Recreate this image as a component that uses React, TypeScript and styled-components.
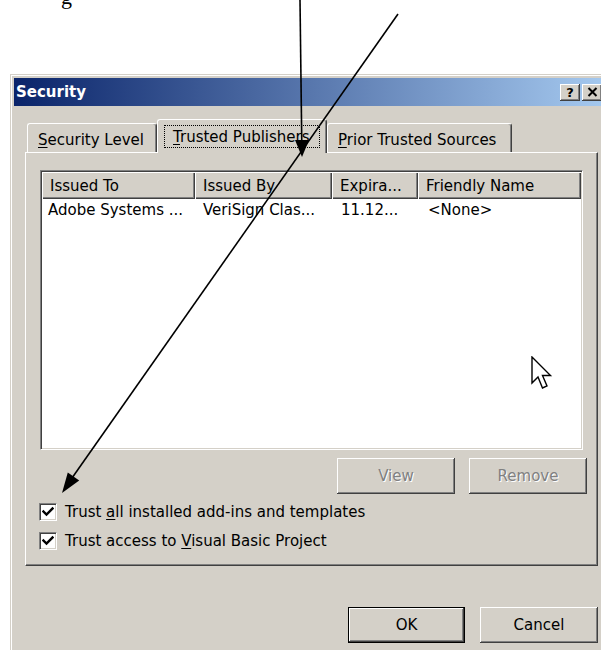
import React from "react";
import styled, { createGlobalStyle } from "styled-components";

const GlobalStyle = createGlobalStyle`
  *, *::before, *::after { box-sizing: border-box; }
  html, body { margin: 0; padding: 0; background: #ffffff; overflow: hidden; }
  #root { width: 601px; height: 650px; overflow: hidden; }
`;

const uiFont = `"DejaVu Sans", "Noto Sans", sans-serif`;
const face = "#d4d0c8";
const shadow = "#808080";
const darkShadow = "#404040";

const Page = styled.div`
  position: relative;
  width: 601px;
  height: 650px;
  overflow: hidden;
  background: #ffffff;
`;

/* tail of the document text that sits above the dialog */
const Above = styled.div`
  height: 74px;
  padding-left: 61px;
  overflow: hidden;
  font-family: "Liberation Serif", serif;
`;

const Fragment = styled.div`
  font-size: 22px;
  line-height: 22px;
  margin-top: -14px;
  color: #000;
`;

const Dialog = styled.div`
  width: 603px;
  height: 600px;
  margin-left: 10px;
  background: ${face};
  border: 1px solid ${face};
  box-shadow: inset 1px 1px 0 #ffffff;
  padding: 3px 3px 0 3px;
  font-family: ${uiFont};
  font-size: 15px;
  color: #000;
`;

const TitleBar = styled.div`
  height: 28px;
  display: flex;
  align-items: center;
  padding-left: 2px;
  background: linear-gradient(to right, #0a246a 0%, #a6caf0 100%);
  color: #ffffff;
  font-weight: bold;
  font-size: 15px;
`;

const CaptionButtons = styled.div`
  margin-left: auto;
  margin-right: 7px;
  display: flex;
  gap: 2px;
`;

const CaptionButton = styled.div`
  width: 20px;
  height: 17px;
  display: flex;
  align-items: center;
  justify-content: center;
  background: ${face};
  color: #000;
  font-family: "DejaVu Sans", sans-serif;
  font-weight: bold;
  font-size: 13px;
  box-shadow: inset -1px -1px 0 ${darkShadow}, inset 1px 1px 0 #ffffff,
    inset -2px -2px 0 ${shadow};
`;

const Body = styled.div`
  padding: 13px 11px 0 11px;
`;

const TabStrip = styled.div`
  position: relative;
  z-index: 2;
  height: 33px;
  display: flex;
  align-items: flex-end;
  padding-left: 2px;
`;

const Tab = styled.div<{ $width: number; $active?: boolean }>`
  width: ${(p) => p.$width}px;
  height: ${(p) => (p.$active ? 34 : 29)}px;
  margin-bottom: ${(p) => (p.$active ? -1 : 0)}px;
  display: flex;
  align-items: center;
  padding: ${(p) => (p.$active ? "3px 0 0 6px" : "3px 0 0 10px")};
  background: ${face};
  border-top: 1px solid #ffffff;
  border-left: 1px solid #ffffff;
  border-right: 1px solid ${darkShadow};
  border-top-left-radius: 3px;
  border-top-right-radius: 3px;
  box-shadow: inset -1px 0 0 ${shadow};
  white-space: nowrap;
`;

const FocusRing = styled.span`
  width: 156px;
  height: 23px;
  display: flex;
  align-items: center;
  padding-left: 8px;
  margin-top: -3px;
  border: 1px dotted #000;
  overflow: hidden;
`;

const Key = styled.span`
  text-decoration: underline;
  text-underline-offset: 2px;
`;

const Panel = styled.div`
  position: relative;
  z-index: 1;
  height: 414px;
  padding: 17px 13px 0 14px;
  border-top: 1px solid #ffffff;
  border-left: 1px solid #ffffff;
  border-right: 1px solid ${darkShadow};
  border-bottom: 1px solid ${darkShadow};
  box-shadow: inset -1px -1px 0 ${shadow};
`;

const ListView = styled.div`
  position: relative;
  width: 543px;
  height: 280px;
  background: #ffffff;
  border-top: 1px solid ${shadow};
  border-left: 1px solid ${shadow};
  border-right: 1px solid #ffffff;
  border-bottom: 1px solid #ffffff;
  box-shadow: inset 1px 1px 0 ${darkShadow}, inset -1px -1px 0 ${face};
  padding: 1px;
  overflow: hidden;
`;

const columns = "153px 137px 86px 1fr";

const HeaderRow = styled.div`
  display: grid;
  grid-template-columns: ${columns};
  height: 27px;
`;

const HeaderCell = styled.div`
  display: flex;
  align-items: center;
  padding-left: 8px;
  background: ${face};
  box-shadow: inset 1px 1px 0 #ffffff, inset -1px -1px 0 ${darkShadow},
    inset -2px -2px 0 ${shadow};
  white-space: nowrap;
  overflow: hidden;
`;

const Row = styled.div`
  display: grid;
  grid-template-columns: ${columns};
  height: 22px;
  align-items: center;
`;

const Cell = styled.div<{ $pad: number }>`
  padding-left: ${(p) => p.$pad}px;
  white-space: nowrap;
  overflow: hidden;
`;

const Pointer = styled.svg`
  position: absolute;
  left: 490px;
  top: 185px;
`;

const Actions = styled.div`
  display: flex;
  justify-content: flex-end;
  gap: 14px;
  margin-top: 8px;
  margin-right: -3px;
`;

const PushButton = styled.button<{ $default?: boolean }>`
  width: ${(p) => (p.$default ? 117 : 118)}px;
  height: 36px;
  padding: 0;
  background: ${face};
  font-family: ${uiFont};
  font-size: 15px;
  color: #000;
  border: ${(p) => (p.$default ? "1px solid #000" : "none")};
  box-shadow: inset -1px -1px 0 ${darkShadow}, inset 1px 1px 0 #ffffff,
    inset -2px -2px 0 ${shadow};
  &:disabled {
    color: ${shadow};
    text-shadow: 1px 1px 0 #ffffff;
  }
`;

const Options = styled.div`
  display: flex;
  flex-direction: column;
  gap: 10px;
  margin-top: 8px;
  margin-left: -1px;
`;

const Option = styled.label`
  display: flex;
  align-items: center;
  gap: 8px;
  height: 19px;
`;

const Box = styled.span`
  width: 18px;
  height: 18px;
  display: flex;
  align-items: center;
  justify-content: center;
  background: #ffffff;
  border-top: 1px solid ${shadow};
  border-left: 1px solid ${shadow};
  border-right: 1px solid #ffffff;
  border-bottom: 1px solid #ffffff;
  box-shadow: inset 1px 1px 0 ${darkShadow}, inset -1px -1px 0 ${face};
`;

const Footer = styled.div`
  display: flex;
  justify-content: flex-end;
  gap: 15px;
  padding-top: 41px;
`;

const Annotations = styled.svg`
  position: absolute;
  left: 0;
  top: 0;
  z-index: 5;
  pointer-events: none;
`;

const Check = () => (
  <svg width="12" height="12" viewBox="0 0 12 12">
    <path d="M1.5 5.5 L4.5 8.5 L10.5 2.5" fill="none" stroke="#000" strokeWidth="2.4" strokeLinecap="square" />
  </svg>
);

export default function App() {
  return (
    <Page>
      <GlobalStyle />
      <Above>
        <Fragment>g</Fragment>
      </Above>
      <Dialog>
        <TitleBar>
          Security
          <CaptionButtons>
            <CaptionButton>?</CaptionButton>
            <CaptionButton>
              <svg width="11" height="10" viewBox="0 0 11 10">
                <path d="M1.5 1 L9.5 9 M9.5 1 L1.5 9" stroke="#000" strokeWidth="2" />
              </svg>
            </CaptionButton>
          </CaptionButtons>
        </TitleBar>
        <Body>
          <TabStrip>
            <Tab $width={130}>
              <span>
                <Key>S</Key>ecurity Level
              </span>
            </Tab>
            <Tab $width={170} $active>
              <FocusRing>
                <span>
                  <Key>T</Key>rusted Publishers
                </span>
              </FocusRing>
            </Tab>
            <Tab $width={185}>
              <span>
                <Key>P</Key>rior Trusted Sources
              </span>
            </Tab>
          </TabStrip>
          <Panel>
            <ListView>
              <HeaderRow>
                <HeaderCell>Issued To</HeaderCell>
                <HeaderCell>Issued By</HeaderCell>
                <HeaderCell>Expira...</HeaderCell>
                <HeaderCell>Friendly Name</HeaderCell>
              </HeaderRow>
              <Row>
                <Cell $pad={6}>Adobe Systems ...</Cell>
                <Cell $pad={8}>VeriSign Clas...</Cell>
                <Cell $pad={9}>11.12...</Cell>
                <Cell $pad={10}>&lt;None&gt;</Cell>
              </Row>
              <Pointer width="22" height="34" viewBox="0 0 22 34">
                <path
                  d="M1 1 L1 27 L7 21 L11.5 32 L16 30 L11.5 19.5 L19.5 19.5 Z"
                  fill="#ffffff"
                  stroke="#000"
                  strokeWidth="1.4"
                  strokeLinejoin="miter"
                />
              </Pointer>
            </ListView>
            <Actions>
              <PushButton disabled>View</PushButton>
              <PushButton disabled>Remove</PushButton>
            </Actions>
            <Options>
              <Option>
                <Box>
                  <Check />
                </Box>
                <span>
                  Trust <Key>a</Key>ll installed add-ins and templates
                </span>
              </Option>
              <Option>
                <Box>
                  <Check />
                </Box>
                <span>
                  Trust access to <Key>V</Key>isual Basic Project
                </span>
              </Option>
            </Options>
          </Panel>
          <Footer>
            <PushButton $default>OK</PushButton>
            <PushButton>Cancel</PushButton>
          </Footer>
        </Body>
      </Dialog>
      <Annotations width="601" height="650" viewBox="0 0 601 650">
        <line x1="300" y1="0" x2="301.8" y2="145" stroke="#000" strokeWidth="1.6" />
        <polygon points="302,157 295,140 309,140" fill="#000" />
        <line x1="398" y1="14" x2="72" y2="478" stroke="#000" strokeWidth="1.6" />
        <polygon points="62,493 67.8,472.6 79.2,480.6" fill="#000" />
      </Annotations>
    </Page>
  );
}
